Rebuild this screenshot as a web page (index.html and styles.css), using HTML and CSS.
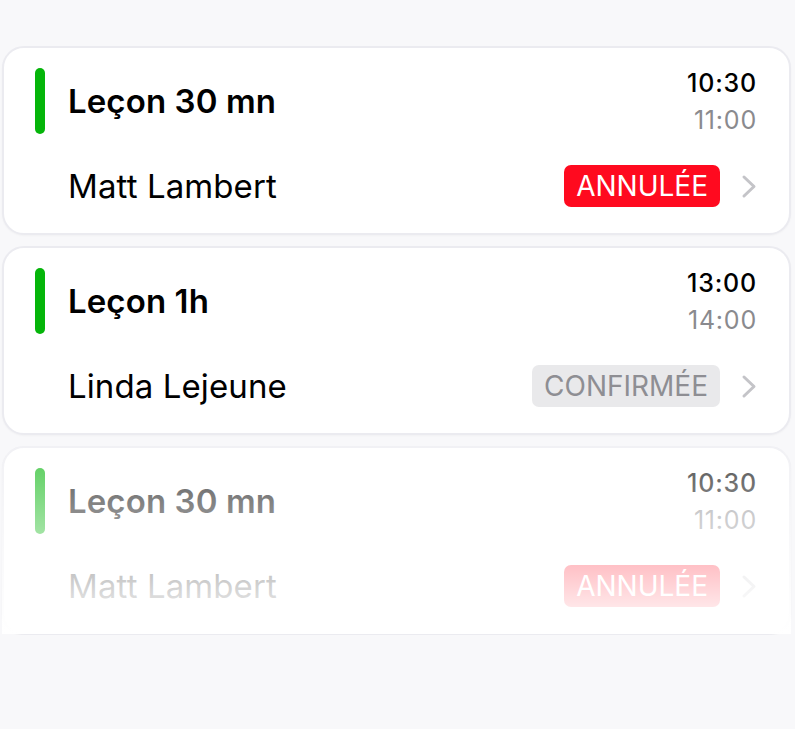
FILE: index.html
```html
<!DOCTYPE html>
<html lang="fr">
<head>
  <meta charset="UTF-8" />
  <meta name="viewport" content="width=device-width, initial-scale=1.0"/>
  <title>Leçons</title>
  <link rel="stylesheet" href="styles.css">
</head>
<body>
  <div class="list">
    <div class="card">
      <div class="top">
        <span class="bar"></span>
        <div class="title">Leçon 30 mn</div>
        <div class="times">
          <span class="start">10:30</span>
          <span class="end">11:00</span>
        </div>
      </div>
      <div class="bottom">
        <div class="name">Matt Lambert</div>
        <span class="badge cancelled">ANNULÉE</span>
        <svg class="chevron" viewBox="0 0 16 25"><polyline points="3,3 13,12.5 3,22"/></svg>
      </div>
    </div>

    <div class="card">
      <div class="top">
        <span class="bar"></span>
        <div class="title">Leçon 1h</div>
        <div class="times">
          <span class="start">13:00</span>
          <span class="end">14:00</span>
        </div>
      </div>
      <div class="bottom">
        <div class="name">Linda Lejeune</div>
        <span class="badge confirmed">CONFIRMÉE</span>
        <svg class="chevron" viewBox="0 0 16 25"><polyline points="3,3 13,12.5 3,22"/></svg>
      </div>
    </div>

    <div class="card faded">
      <div class="top">
        <span class="bar"></span>
        <div class="title">Leçon 30 mn</div>
        <div class="times">
          <span class="start">10:30</span>
          <span class="end">11:00</span>
        </div>
      </div>
      <div class="bottom">
        <div class="name">Matt Lambert</div>
        <span class="badge cancelled">ANNULÉE</span>
        <svg class="chevron" viewBox="0 0 16 25"><polyline points="3,3 13,12.5 3,22"/></svg>
      </div>
    </div>
  </div>
</body>
</html>
```

FILE: styles.css
```css
body {
  margin: 0;
  background: #f8f8fa;
  font-family: Inter, "Liberation Sans", sans-serif;
  color: #000;
}
.list {
  width: 789px;
  padding: 46px 0 0 2px;
  display: flex;
  flex-direction: column;
  gap: 11px;
}
.card {
  position: relative;
  background: white;
  border: 2px solid #ebebf0;
  border-radius: 22px;
  padding: 20px 32px 26px 31px;
  box-shadow: 0 1px 2px rgba(0, 0, 0, 0.03);
}
.top {
  display: flex;
  align-items: center;
  height: 66px;
}
.bar {
  width: 10px;
  height: 66px;
  border-radius: 5px;
  background: #05b50a;
  margin-right: 23px;
}
.title {
  flex: 1;
  font-size: 33px;
  font-weight: 600;
  letter-spacing: 0.1px;
}
.times {
  display: flex;
  flex-direction: column;
  align-items: flex-end;
  font-size: 25px;
  letter-spacing: 0.8px;
  line-height: 37px;
  margin-top: 1px;
}
.times .start {
  font-weight: 500;
}
.times .end {
  color: #8a8a8e;
}
.bottom {
  display: flex;
  align-items: center;
  height: 42px;
  margin-top: 31px;
  padding-left: 33px;
}
.name {
  flex: 1;
  font-size: 33px;
  letter-spacing: 0.1px;
}
.badge {
  height: 42px;
  line-height: 42px;
  padding: 0 12px;
  border-radius: 7px;
  font-size: 28px;
}
.cancelled {
  background: #ff0a1f;
  color: white;
}
.confirmed {
  background: #e9e9eb;
  color: #8e8e93;
}
.chevron {
  width: 16px;
  height: 25px;
  margin-left: 21px;
  fill: none;
  stroke: #c4c4c8;
  stroke-width: 3;
  stroke-linecap: round;
  stroke-linejoin: round;
}
.faded::after {
  content: "";
  position: absolute;
  top: -2px;
  left: -2px;
  right: -2px;
  bottom: -1px;
  border-radius: 22px 22px 0 0;
  background: linear-gradient(rgba(255, 255, 255, 0.3), rgba(255, 255, 255, 1));
}
```
